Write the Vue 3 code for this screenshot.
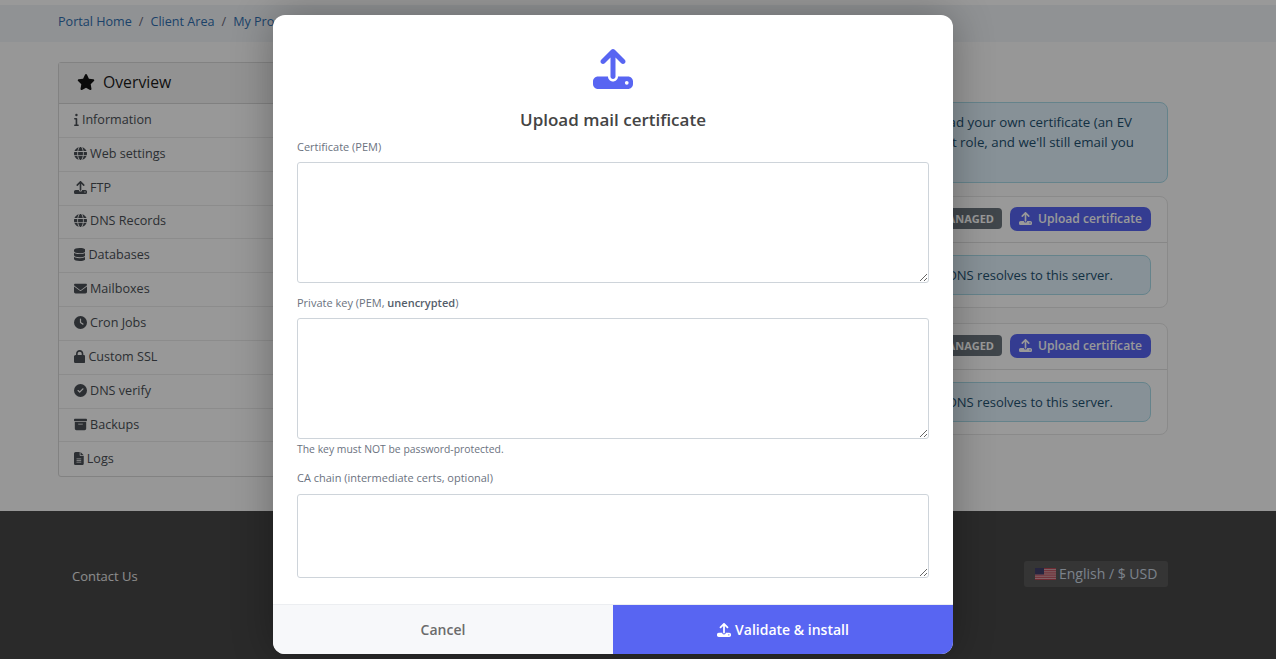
<script setup>
const upload = 'M288 109.3V352c0 17.7-14.3 32-32 32s-32-14.3-32-32V109.3l-73.4 73.4c-12.5 12.5-32.8 12.5-45.3 0s-12.5-32.8 0-45.3l128-128c12.5-12.5 32.8-12.5 45.3 0l128 128c12.5 12.5 12.5 32.8 0 45.3s-32.8 12.5-45.3 0L288 109.3zM64 352H192c0 35.3 28.7 64 64 64s64-28.7 64-64H448c35.3 0 64 28.7 64 64v32c0 35.3-28.7 64-64 64H64c-35.3 0-64-28.7-64-64V416c0-35.3 28.7-64 64-64zM432 456a24 24 0 1 0 0-48 24 24 0 1 0 0 48z'
const globe = 'M352 256c0 22.2-1.2 43.6-3.3 64H163.3c-2.2-20.4-3.3-41.8-3.3-64s1.2-43.6 3.3-64H348.7c2.2 20.4 3.3 41.8 3.3 64zm28.8-64H503.9c5.3 20.5 8.1 41.9 8.1 64s-2.8 43.5-8.1 64H380.8c2.1-20.6 3.2-42 3.2-64s-1.1-43.4-3.2-64zm112.6-32H376.7c-10-63.9-29.8-117.4-55.3-151.6c78.3 20.7 142 77.5 171.9 151.6zm-149.1 0H167.7c6.1-36.4 15.5-68.6 27-94.7c10.5-23.6 22.2-40.7 33.5-51.5C239.4 3.2 248.7 0 256 0s16.6 3.2 27.8 13.8c11.3 10.8 23 27.9 33.5 51.5c11.6 26 20.9 58.2 27 94.7zm-209 0H18.6C48.6 85.9 112.2 29.1 190.6 8.4C165.1 42.6 145.3 96.1 135.3 160zM8.1 192H131.2c-2.1 20.6-3.2 42-3.2 64s1.1 43.4 3.2 64H8.1C2.8 299.5 0 278.1 0 256s2.8-43.5 8.1-64zM194.7 446.6c-11.6-26-20.9-58.2-27-94.6H344.3c-6.1 36.4-15.5 68.6-27 94.6c-10.5 23.6-22.2 40.7-33.5 51.5C272.6 508.8 263.3 512 256 512s-16.6-3.2-27.8-13.8c-11.3-10.8-23-27.9-33.5-51.5zM135.3 352c10 63.9 29.8 117.4 55.3 151.6C112.2 482.9 48.6 426.1 18.6 352H135.3zm358.1 0c-30 74.1-93.6 130.9-171.9 151.6c25.5-34.2 45.2-87.7 55.3-151.6H493.4z'
const star = 'M316.9 18C311.6 7 300.4 0 288.1 0s-23.4 7-28.8 18L195 150.3 51.4 171.5c-12 1.8-22 10.2-25.7 21.7s-.7 24.2 7.9 32.7L137.8 329 113.2 474.7c-2 12 3 24.2 12.9 31.3s23 8 33.8 2.3l128.3-68.5 128.3 68.5c10.8 5.7 23.9 4.9 33.8-2.3s14.9-19.3 12.9-31.3L438.5 329 542.7 225.9c8.6-8.5 11.7-21.2 7.9-32.7s-13.7-19.9-25.7-21.7L381.2 150.3 316.9 18z'

const menu = [
  { label: 'Information', w: 192, d: 'M48 80a48 48 0 1 1 96 0A48 48 0 1 1 48 80zM0 224c0-17.7 14.3-32 32-32H96c17.7 0 32 14.3 32 32V448h32c17.7 0 32 14.3 32 32s-14.3 32-32 32H32c-17.7 0-32-14.3-32-32s14.3-32 32-32H64V256H32c-17.7 0-32-14.3-32-32z' },
  { label: 'Web settings', w: 512, d: globe },
  { label: 'FTP', w: 512, d: upload },
  { label: 'DNS Records', w: 512, d: globe },
  { label: 'Databases', w: 448, d: 'M448 80v48c0 44.2-100.3 80-224 80S0 172.2 0 128V80C0 35.8 100.3 0 224 0S448 35.8 448 80zM393.2 214.7c20.8-7.4 39.9-16.9 54.8-28.6V288c0 44.2-100.3 80-224 80S0 332.2 0 288V186.1c14.9 11.8 34 21.2 54.8 28.6C99.7 230.7 159.5 240 224 240s124.3-9.3 169.2-25.3zM0 346.1c14.9 11.8 34 21.2 54.8 28.6C99.7 390.7 159.5 400 224 400s124.3-9.3 169.2-25.3c20.8-7.4 39.9-16.9 54.8-28.6V432c0 44.2-100.3 80-224 80S0 476.2 0 432V346.1z' },
  { label: 'Mailboxes', w: 512, d: 'M48 64C21.5 64 0 85.5 0 112c0 15.1 7.1 29.3 19.2 38.4L236.8 313.6c11.4 8.5 27 8.5 38.4 0L492.8 150.4c12.1-9.1 19.2-23.3 19.2-38.4c0-26.5-21.5-48-48-48H48zM0 176V384c0 35.3 28.7 64 64 64H448c35.3 0 64-28.7 64-64V176L294.4 339.2c-22.8 17.1-54 17.1-76.8 0L0 176z' },
  { label: 'Cron Jobs', w: 512, d: 'M256 0a256 256 0 1 1 0 512A256 256 0 1 1 256 0zM232 120V256c0 8 4 15.5 10.7 20l96 64c11 7.4 25.9 4.4 33.3-6.7s4.4-25.9-6.7-33.3L280 243.2V120c0-13.3-10.7-24-24-24s-24 10.7-24 24z' },
  { label: 'Custom SSL', w: 448, d: 'M144 144v48H304V144c0-44.2-35.8-80-80-80s-80 35.8-80 80zM80 192V144C80 64.5 144.5 0 224 0s144 64.5 144 144v48h16c35.3 0 64 28.7 64 64V448c0 35.3-28.7 64-64 64H64c-35.3 0-64-28.7-64-64V256c0-35.3 28.7-64 64-64H80z' },
  { label: 'DNS verify', w: 512, d: 'M256 512A256 256 0 1 0 256 0a256 256 0 1 0 0 512zM369 209L241 337c-9.4 9.4-24.6 9.4-33.9 0l-64-64c-9.4-9.4-9.4-24.6 0-33.9s24.6-9.4 33.9 0l47 47L335 175c9.4-9.4 24.6-9.4 33.9 0s9.4 24.6 0 33.9z' },
  { label: 'Backups', w: 512, d: 'M32 32H480c17.7 0 32 14.3 32 32V96c0 17.7-14.3 32-32 32H32C14.3 128 0 113.7 0 96V64C0 46.3 14.3 32 32 32zm0 128H480V416c0 35.3-28.7 64-64 64H96c-35.3 0-64-28.7-64-64V160zm128 80c0 8.8 7.2 16 16 16H336c8.8 0 16-7.2 16-16s-7.2-16-16-16H176c-8.8 0-16 7.2-16 16z' },
  { label: 'Logs', w: 384, d: 'M64 0C28.7 0 0 28.7 0 64V448c0 35.3 28.7 64 64 64H320c35.3 0 64-28.7 64-64V160H256c-17.7 0-32-14.3-32-32V0H64zM256 0V128H384L256 0zM112 256H272c8.8 0 16 7.2 16 16s-7.2 16-16 16H112c-8.8 0-16-7.2-16-16s7.2-16 16-16zm0 64H272c8.8 0 16 7.2 16 16s-7.2 16-16 16H112c-8.8 0-16-7.2-16-16s7.2-16 16-16zm0 64H272c8.8 0 16 7.2 16 16s-7.2 16-16 16H112c-8.8 0-16-7.2-16-16s7.2-16 16-16z' }
]
const certCards = [0, 1]
const flagStripes = [0, 2, 4, 6, 8, 10, 12]
</script>

<template>
  <div class="page">
    <div class="topline"></div>
    <nav class="crumbs">
      <a>Portal Home</a><span class="sep">/</span><a>Client Area</a><span class="sep">/</span><a>My Products</a>
    </nav>

    <div class="content">
      <aside class="side">
        <div class="side-head">
          <svg class="star" viewBox="0 0 576 512"><path :d="star" /></svg>
          <span>Overview</span>
        </div>
        <a v-for="item in menu" :key="item.label" class="side-row">
          <svg class="ico" :viewBox="`0 0 ${item.w} 512`"><path :d="item.d" /></svg>
          <span>{{ item.label }}</span>
        </a>
      </aside>

      <main class="main">
        <div class="alert top-alert">
          <div class="first-line">upload your own certificate (an EV</div>
          <div>that role, and we'll still email you</div>
        </div>
        <section v-for="c in certCards" :key="c" class="card">
          <header class="card-head">
            <span class="badge">MANAGED</span>
            <button class="up-btn">
              <svg class="ico" viewBox="0 0 512 512"><path :d="upload" /></svg>
              Upload certificate
            </button>
          </header>
          <div class="card-body">
            <div class="alert small-alert">DNS resolves to this server.</div>
          </div>
        </section>
      </main>
    </div>

    <footer class="foot">
      <a class="contact">Contact Us</a>
      <button class="lang">
        <svg class="flag" viewBox="0 0 21 13" preserveAspectRatio="none">
          <rect width="21" height="13" fill="#eec5cb" />
          <rect v-for="y in flagStripes" :key="y" x="0" :y="y" width="21" height="1" fill="#c8384a" />
          <rect width="9" height="7" fill="#3c3b6e" />
        </svg>
        English / $ USD
      </button>
    </footer>

    <div class="overlay">
      <div class="modal">
        <div class="modal-top">
          <svg class="modal-icon" viewBox="0 0 512 512"><path :d="upload" /></svg>
          <h2>Upload mail certificate</h2>
        </div>
        <form class="form">
          <label>Certificate (PEM)</label>
          <textarea class="ta ta1"></textarea>
          <label class="l2">Private key (PEM, <b>unencrypted</b>)</label>
          <textarea class="ta ta1"></textarea>
          <small>The key must NOT be password-protected.</small>
          <label class="l3">CA chain (intermediate certs, optional)</label>
          <textarea class="ta ta3"></textarea>
        </form>
        <div class="actions">
          <button class="cancel">Cancel</button>
          <button class="confirm">
            <svg class="ico" viewBox="0 0 512 512"><path :d="upload" /></svg>
            Validate &amp; install
          </button>
        </div>
      </div>
    </div>
  </div>
</template>

<style>
html, body { margin: 0; background: #fff; overflow: hidden; }
</style>

<style scoped>
* { box-sizing: border-box; }
.page {
  position: relative;
  height: 659px;
  overflow: hidden;
  display: flex;
  flex-direction: column;
  background: #fcfcfc;
  font-family: "Open Sans", "Noto Sans", sans-serif;
  color: #333;
}
.topline { height: 5px; flex: none; background: #fff; }
.crumbs {
  flex: none;
  height: 37px;
  padding: 0 58px 4px;
  display: flex;
  align-items: center;
  background: #f1f3f7;
  font-size: 12.6px;
  color: #2f6fb0;
}
.crumbs .sep { margin: 0 7px; color: #667; }
.content {
  flex: 1;
  display: flex;
  gap: 20px;
  padding: 20px 108px 0 58px;
  min-height: 0;
}
.side {
  width: 262px;
  height: 415px;
  flex: none;
  background: #fdfdfd;
  border: 1px solid #d9d9d9;
  border-radius: 3px;
  display: flex;
  flex-direction: column;
}
.side-head {
  height: 41px;
  flex: none;
  display: flex;
  align-items: center;
  gap: 8px;
  padding: 0 0 2px 18px;
  font-size: 15.75px;
  color: #1c1c1c;
  background: #f4f4f4;
  border-bottom: 1px solid #d6d6d6;
}
.star { width: 18px; height: 16px; fill: #111; }
.side-row {
  flex: 0 0 33.85px;
  display: flex;
  align-items: center;
  gap: 3px;
  padding: 0 0 2px 15px;
  font-size: 12.6px;
  color: #4a4f55;
  border-bottom: 1px solid #e9e9e9;
}
.side-row:last-child { border-bottom: 0; }
.ico { height: 13px; width: auto; flex: none; fill: currentColor; }
.main {
  flex: 1;
  min-width: 0;
  margin-top: 40px;
  display: flex;
  flex-direction: column;
}
.alert {
  background: #e2f2fc;
  border: 1px solid #a9dbe8;
  border-radius: 8px;
  color: #21506f;
  font-size: 13px;
}
.top-alert {
  height: 80.5px;
  margin-bottom: 13.5px;
  padding: 9px 33px 0 0;
  line-height: 20px;
  font-size: 13.3px;
  text-align: right;
  white-space: nowrap;
}
.first-line { padding-right: 2px; }
.card {
  margin-bottom: 14.6px;
  background: #fff;
  border: 1px solid #e6e6e6;
  border-radius: 8px;
}
.card-head {
  height: 46.4px;
  padding: 0 16px 2px;
  display: flex;
  align-items: center;
  justify-content: flex-end;
  gap: 8px;
  border-bottom: 1px solid #e2e2e2;
}
.badge {
  height: 21px;
  padding: 0 8px;
  display: flex;
  align-items: center;
  font-size: 11px;
  font-weight: 700;
  color: #fff;
  background: #6c757d;
  border-radius: 4px;
}
.up-btn {
  height: 24px;
  width: 141px;
  display: flex;
  align-items: center;
  justify-content: center;
  gap: 6px;
  border: 0;
  border-radius: 7px;
  background: #5865f2;
  color: #fff;
  font: 600 12.1px "Open Sans", sans-serif;
}
.card-body { padding: 12px 16px; }
.small-alert {
  height: 40px;
  padding-right: 37px;
  display: flex;
  align-items: center;
  justify-content: flex-end;
  white-space: nowrap;
}
.foot {
  flex: none;
  height: 148px;
  padding: 50px 108px 0 72px;
  display: flex;
  align-items: flex-start;
  justify-content: space-between;
  background: #474747;
}
.contact { margin-top: 6px; font-size: 13px; color: #e9e9e9; }
.lang {
  height: 26px;
  width: 144px;
  display: flex;
  align-items: center;
  gap: 3px;
  padding: 0 0 2px 11px;
  border: 0;
  border-radius: 3px;
  background: #595959;
  color: #ced9e6;
  font: 400 14px "Open Sans", sans-serif;
}
.flag { width: 21px; height: 12px; margin-top: 2px; opacity: 0.85; }
.overlay {
  position: absolute;
  inset: 0;
  background: rgba(0, 0, 0, 0.4);
}
.modal {
  position: absolute;
  left: 273px;
  top: 15px;
  width: 680px;
  height: 639px;
  background: #fff;
  border-radius: 12px;
  overflow: hidden;
  display: flex;
  flex-direction: column;
  box-shadow: 0 0 40px rgba(0, 0, 0, 0.3);
}
.modal-top {
  height: 124px;
  flex: none;
  padding-top: 34px;
  display: flex;
  flex-direction: column;
  align-items: center;
}
.modal-icon { width: 40px; height: 40px; flex: none; fill: #5865f2; }
h2 {
  margin: 19px 0 0;
  font-size: 17px;
  line-height: 24px;
  font-weight: 600;
  color: #444;
}
.form {
  flex: 1;
  padding: 0 24px;
  display: flex;
  flex-direction: column;
  align-items: stretch;
}
label, small {
  display: block;
  font-size: 11px;
  line-height: 15px;
  color: #6b7280;
}
label b { font-weight: 600; color: #555e6b; }
.ta {
  display: block;
  width: 100%;
  margin-top: 8px;
  border: 1px solid #ced4da;
  border-radius: 3px;
  background: #fff;
  resize: vertical;
  outline: none;
}
.ta1 { height: 121px; flex: none; }
.ta3 { height: 84px; flex: none; margin-top: 9px; }
.l2 { margin-top: 12px; }
small { margin-top: 3px; font-size: 10.4px; }
.l3 { margin-top: 13px; }
.actions {
  height: 50px;
  flex: none;
  display: grid;
  grid-template-columns: 1fr 1fr;
  border-top: 1px solid #eceef1;
}
.cancel, .confirm {
  border: 0;
  font: 600 14px "Open Sans", sans-serif;
  display: flex;
  align-items: center;
  justify-content: center;
  gap: 4px;
}
.cancel {
  background: #f7f8fa;
  color: #6b6b6b;
}
.confirm { background: #5865f2; color: #fff; }
.confirm .ico { height: 14px; }
</style>
